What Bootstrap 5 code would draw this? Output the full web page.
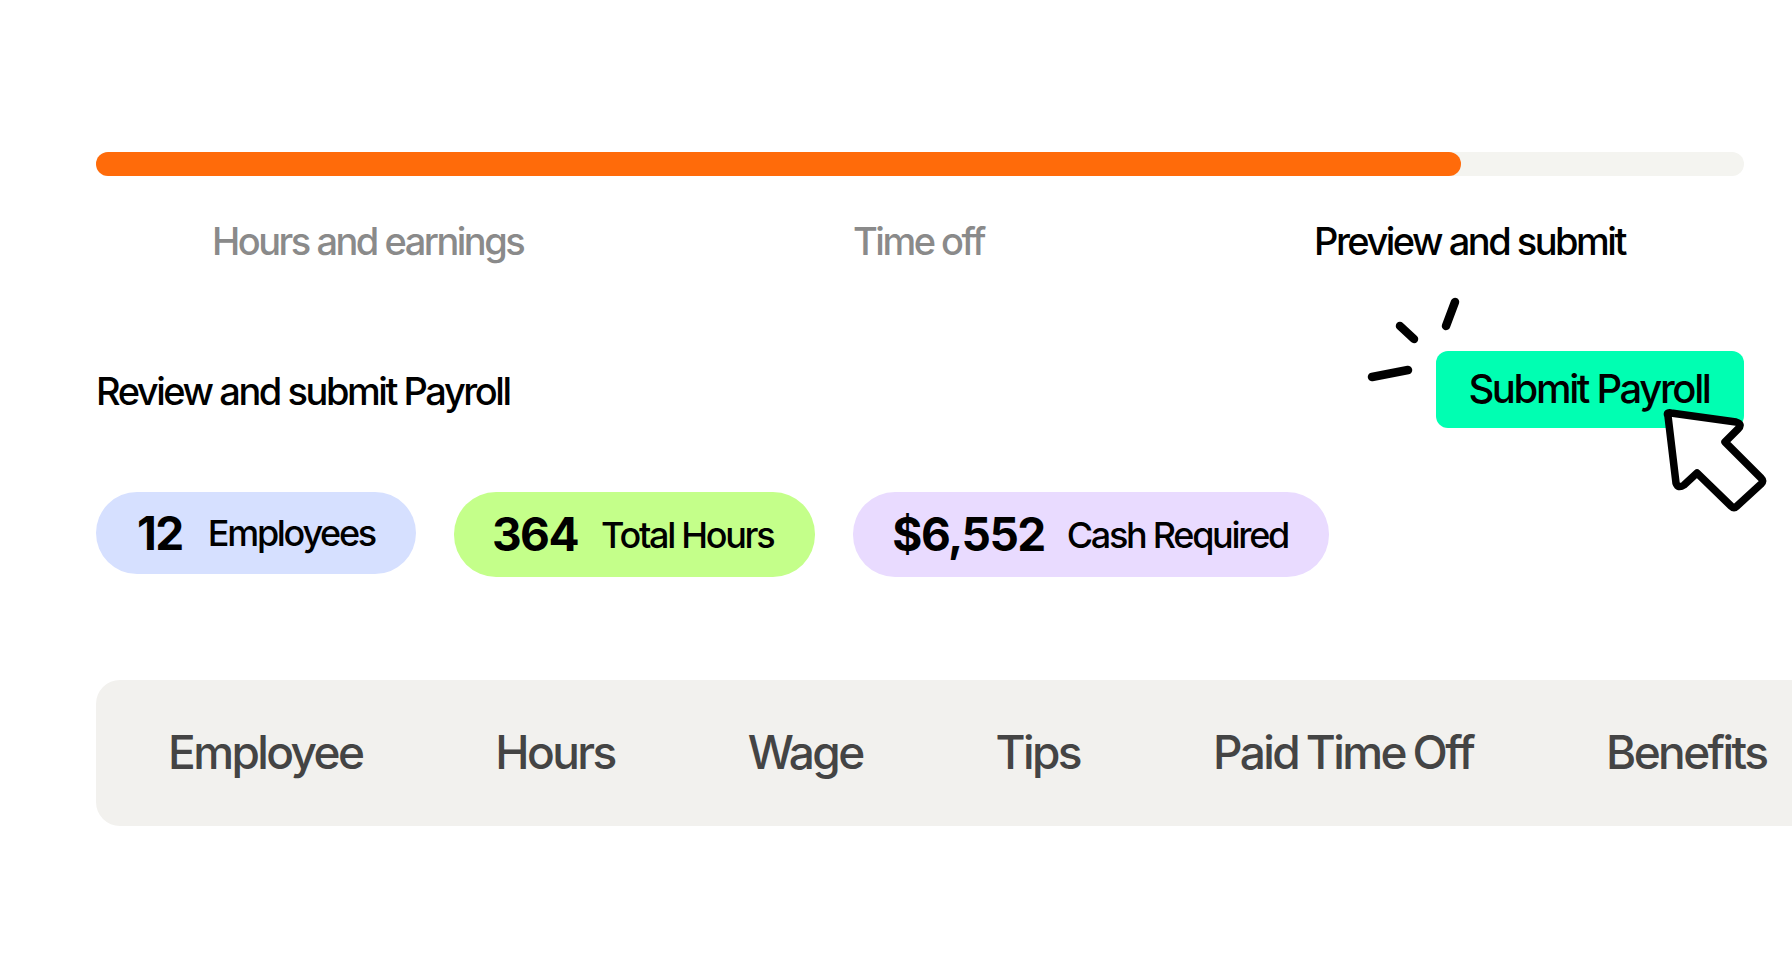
<!DOCTYPE html>
<html lang="en">
<head>
<meta charset="UTF-8">
<title>Payroll</title>
<link href="https://cdn.jsdelivr.net/npm/bootstrap@5.3.0/dist/css/bootstrap.min.css" rel="stylesheet">
<style>
body { font-family: Inter, "Liberation Sans", sans-serif; background: #fff; color: #000; overflow: hidden; height: 972px; }
.page-wrap { padding: 152px 48px 0 96px; width: 1792px; }
.track { height: 24px; background: #f4f4f0; border-radius: 12px; }
.track-fill { height: 24px; width: 1365px; background: #ff6b0a; border-radius: 12px; }
.steps { margin-top: 43px; font-size: 38px; letter-spacing: -2.5px; line-height: 44px; font-weight: 500; color: #8a8a8a; }
.step-a { margin-left: 116px; width: 641px; }
.step-b { width: 461px; }
.step-c { color: #000; }
.head-row { margin-top: 88px; height: 77px; }
.head-title { font-size: 38px; letter-spacing: -2.45px; font-weight: 500; padding-top: 3px; }
.submit-box { width: 308px; height: 77px; padding: 0 2px 2px 0; background: #00ffb2; border-radius: 12px; font-size: 40px; letter-spacing: -2.35px; font-weight: 500; }
.pointer-layer { position: absolute; left: 1340px; top: 280px; }
.pill-row { margin-top: 64px; gap: 38px; height: 85px; }
.pill-box { height: 85px; border-radius: 42px; font-weight: 500; font-size: 36px; letter-spacing: -2.3px; }
.pill-box b { font-size: 46px; font-weight: 700; letter-spacing: -1.5px; }
.pill-blue { background: #d6e0ff; height: 82px; padding: 0 41px 0 41px; }
.pill-blue b { margin-right: 25px; }
.pill-green { background: #c4ff8a; padding: 0 42px 0 38px; }
.pill-green b { margin-right: 23px; }
.pill-purple { background: #e9dbff; padding: 0 41px 0 39px; }
.pill-purple b { margin-right: 22px; }
.head-table { margin-top: 103px; margin-right: -48px; height: 146px; padding-bottom: 2px; background: #f2f1ee; border-radius: 24px 0 0 24px; padding-left: 72px; font-size: 46px; letter-spacing: -2.6px; word-spacing: -2px; font-weight: 500; color: #444; white-space: nowrap; gap: 133px; }
</style>
</head>
<body>
<div class="page-wrap">
  <div class="track"><div class="track-fill"></div></div>
  <div class="steps d-flex">
    <div class="step-a">Hours and earnings</div>
    <div class="step-b">Time off</div>
    <div class="step-c">Preview and submit</div>
  </div>
  <div class="head-row d-flex justify-content-between align-items-center">
    <div class="head-title">Review and submit Payroll</div>
    <div class="submit-box d-flex align-items-center justify-content-center">Submit Payroll</div>
  </div>
  <div class="pill-row d-flex align-items-start">
    <div class="pill-box pill-blue d-flex align-items-center"><b>12</b>Employees</div>
    <div class="pill-box pill-green d-flex align-items-center"><b>364</b>Total Hours</div>
    <div class="pill-box pill-purple d-flex align-items-center"><b>$6,552</b>Cash Required</div>
  </div>
  <div class="head-table d-flex align-items-center">
    <span>Employee</span><span>Hours</span><span>Wage</span><span>Tips</span><span>Paid Time Off</span><span>Benefits</span>
  </div>
</div>
<svg class="pointer-layer" width="452" height="240" viewBox="0 0 452 240" fill="none">
  <path d="M32 97L68 90M60 46L74 59M115 22L106 46" stroke="#000" stroke-width="8.5" stroke-linecap="round"/>
  <path d="M328 136Q326 132 331 133L396 142Q403 144 398 149L385 162L421 198Q424 201 421 204L397 226Q394 229 391 226L357 193L344 205Q338 209 336 203Z" fill="#fff" stroke="#000" stroke-width="7.5" stroke-linejoin="round"/>
</svg>
</body>
</html>
